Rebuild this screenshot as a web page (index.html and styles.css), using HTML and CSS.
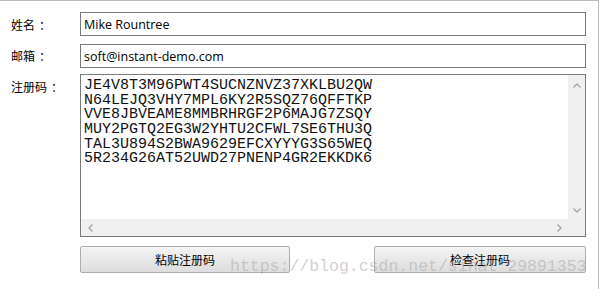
FILE: index.html
```html
<!DOCTYPE html>
<html lang="zh">
<head>
<meta charset="utf-8">
<title>注册</title>
<link rel="stylesheet" href="styles.css">
</head>
<body>
<div class="window">
  <div class="form">
    <div class="label">姓名<span class="colon">：</span></div>
    <div class="field input">Mike Rountree</div>
    <div class="label">邮箱<span class="colon">：</span></div>
    <div class="field input">soft@instant-demo.com</div>
    <div class="label label-top">注册码<span class="colon">：</span></div>
    <div class="field textarea">
      <div class="ta-content">JE4V8T3M96PWT4SUCNZNVZ37XKLBU2QW
N64LEJQ3VHY7MPL6KY2R5SQZ76QFFTKP
VVE8JBVEAME8MMBRHRGF2P6MAJG7ZSQY
MUY2PGTQ2EG3W2YHTU2CFWL7SE6THU3Q
TAL3U894S2BWA9629EFCXYYYG3S65WEQ
5R234G26AT52UWD27PNENP4GR2EKKDK6</div>
      <div class="vbar">
        <svg class="arr" viewBox="0 0 8 5" width="8" height="5"><path d="M0.5 4.5 L4 1 L7.5 4.5" fill="none" stroke="#a6a6a6" stroke-width="1.4"/></svg>
        <svg class="arr" viewBox="0 0 8 5" width="8" height="5"><path d="M0.5 0.5 L4 4 L7.5 0.5" fill="none" stroke="#a6a6a6" stroke-width="1.4"/></svg>
      </div>
      <div class="hbar">
        <svg class="arr" viewBox="0 0 5 8" width="5" height="8"><path d="M4.5 0.5 L1 4 L4.5 7.5" fill="none" stroke="#a6a6a6" stroke-width="1.4"/></svg>
        <svg class="arr" viewBox="0 0 5 8" width="5" height="8"><path d="M0.5 0.5 L4 4 L0.5 7.5" fill="none" stroke="#a6a6a6" stroke-width="1.4"/></svg>
      </div>
      <div class="corner"></div>
    </div>
    <div></div>
    <div class="field buttons">
      <button class="btn btn-paste">粘贴注册码</button>
      <button class="btn btn-check">检查注册码</button>
    </div>
  </div>
  <div class="watermark">https://blog.csdn.net/sinat_29891353</div>
</div>
</body>
</html>
```
FILE: styles.css
```css
* { box-sizing: border-box; }
html, body { margin: 0; padding: 0; background: #fff; }
body { width: 600px; height: 289px; overflow: hidden; }

.window {
  position: relative;
  width: 599px;
  height: 289px;
  border-top: 1px solid #bcbcbc;
  border-right: 1px solid #bcbcbc;
}

.form {
  display: grid;
  grid-template-columns: 69px 506px;
  grid-template-rows: 24px 23px 162px 27px;
  row-gap: 8px;
  padding: 11px 0 0 11px;
}
.form > :nth-child(4) { margin-bottom: -1px; }

.label {
  font-family: "Noto Sans CJK SC", sans-serif;
  font-size: 12px;
  color: #000;
  display: flex;
  align-items: center;
}
.label-top { align-items: flex-start; padding-top: 3px; }
.colon { padding-left: 4px; }

.input {
  border: 1px solid #7a7a7a;
  font-family: "Open Sans", sans-serif;
  font-size: 12.5px;
  color: #000;
  padding-left: 3px;
  display: flex;
  align-items: center;
}

.textarea {
  border: 1px solid #7a7a7a;
  display: grid;
  grid-template-columns: 1fr 17px;
  grid-template-rows: 1fr 17px;
  margin-top: -1px;
}
.ta-content {
  font-family: "Liberation Mono", monospace;
  font-size: 15px;
  line-height: 14.67px;
  color: #111;
  white-space: pre;
  padding: 4px 0 0 3px;
  overflow: hidden;
}
.vbar {
  background: #f0f0f0;
  display: flex;
  flex-direction: column;
  justify-content: space-between;
  align-items: center;
  padding: 8px 0 6px;
}
.hbar {
  background: #f0f0f0;
  display: flex;
  justify-content: space-between;
  align-items: center;
  padding: 0 6px 0 7px;
}
.corner { background: #f0f0f0; }
.arr { display: block; }

.buttons {
  display: flex;
  justify-content: space-between;
  margin-top: 1px;
}
.btn {
  height: 27px;
  border: 1px solid #adadad;
  border-radius: 2px;
  background: linear-gradient(#f4f4f4, #dddddd);
  font-family: "Noto Sans CJK SC", sans-serif;
  font-size: 12px;
  color: #000;
  padding: 0;
}
.btn-paste { width: 210px; }
.btn-check { width: 212px; }

.watermark {
  position: absolute;
  left: 230px;
  top: 256px;
  font-family: "Liberation Mono", monospace;
  font-size: 16.5px;
  color: rgba(170, 170, 170, 0.55);
  white-space: nowrap;
  pointer-events: none;
}
```
